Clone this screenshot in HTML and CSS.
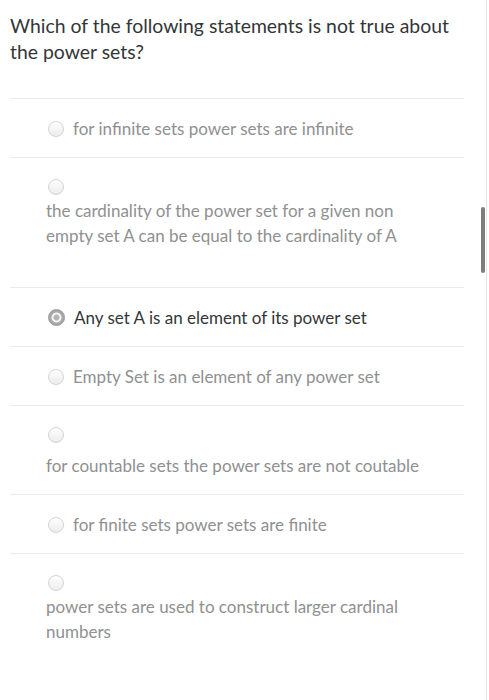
FILE: index.html
```html
<!DOCTYPE html>
<html>
<head>
<meta charset="utf-8">
<link rel="stylesheet" href="styles.css">
</head>
<body>
<div class="frame">
  <div class="question">
    <div class="question-text">Which of the following statements is not true about the power sets?</div>
    <div class="answers">
      <div class="answer inline">
        <span class="radio"></span>
        <span class="answer-text">for infinite sets power sets are infinite</span>
      </div>
      <div class="answer stacked tall">
        <div class="radio-line"><span class="radio"></span></div>
        <div class="answer-text">the cardinality of the power set for a given non empty set A can be equal to the cardinality of A</div>
      </div>
      <div class="answer inline selected">
        <span class="radio checked"></span>
        <span class="answer-text">Any set A is an element of its power set</span>
      </div>
      <div class="answer inline">
        <span class="radio"></span>
        <span class="answer-text">Empty Set is an element of any power set</span>
      </div>
      <div class="answer stacked spaced">
        <div class="radio-line"><span class="radio"></span></div>
        <div class="answer-text">for countable sets the power sets are not coutable</div>
      </div>
      <div class="answer inline">
        <span class="radio"></span>
        <span class="answer-text">for finite sets power sets are finite</span>
      </div>
      <div class="answer stacked">
        <div class="radio-line"><span class="radio"></span></div>
        <div class="answer-text">power sets are used to construct larger cardinal numbers</div>
      </div>
    </div>
  </div>
  <div class="scroll-thumb"></div>
</div>
</body>
</html>
```

FILE: styles.css
```css
html, body {
  margin: 0;
  padding: 0;
  background: #fff;
}

body {
  font-family: Lato, "Open Sans", sans-serif;
  overflow: hidden;
}

.frame {
  position: relative;
  width: 486px;
  height: 700px;
  border-right: 1px solid #e8e8e8;
  overflow: hidden;
}

.question {
  width: 454px;
  padding: 13px 0 0 10px;
}

.question-text {
  font-size: 19.4px;
  line-height: 26px;
  color: #333638;
  padding-right: 4px;
  margin-bottom: 33px;
}

.answer {
  border-top: 1px solid #ebebeb;
  padding: 17px 0 16px 36px;
  font-size: 17px;
  line-height: 25px;
  color: #8f9092;
}

.answer.inline {
  display: flex;
  align-items: center;
}

.answer.inline .answer-text {
  margin-left: 9px;
}

.answer.selected {
  color: #333638;
}

.answer.stacked {
  padding-top: 18px;
}

.answer.stacked .answer-text {
  width: 385px;
}

.answer.tall {
  padding-bottom: 39px;
}

.answer.spaced .answer-text {
  margin-top: 7px;
}

.radio-line {
  height: 22px;
  display: flex;
  align-items: center;
}

.radio {
  display: inline-block;
  flex: none;
  width: 16px;
  height: 16px;
  margin-left: 2px;
  box-sizing: border-box;
  border-radius: 50%;
  border: 1px solid #d4d4d4;
  background: linear-gradient(#ffffff, #ececec);
}

.radio.checked {
  width: 17px;
  height: 17px;
  border: 1px solid #9a9a9a;
  background: radial-gradient(circle, #b5b5b5 0 2.5px, #f4f4f4 3.5px 4.5px, #a8a8a8 5.5px);
}

.scroll-thumb {
  position: absolute;
  left: 481px;
  top: 207px;
  width: 4px;
  height: 66px;
  border-radius: 2px;
  background: #7d7d7d;
}
```
